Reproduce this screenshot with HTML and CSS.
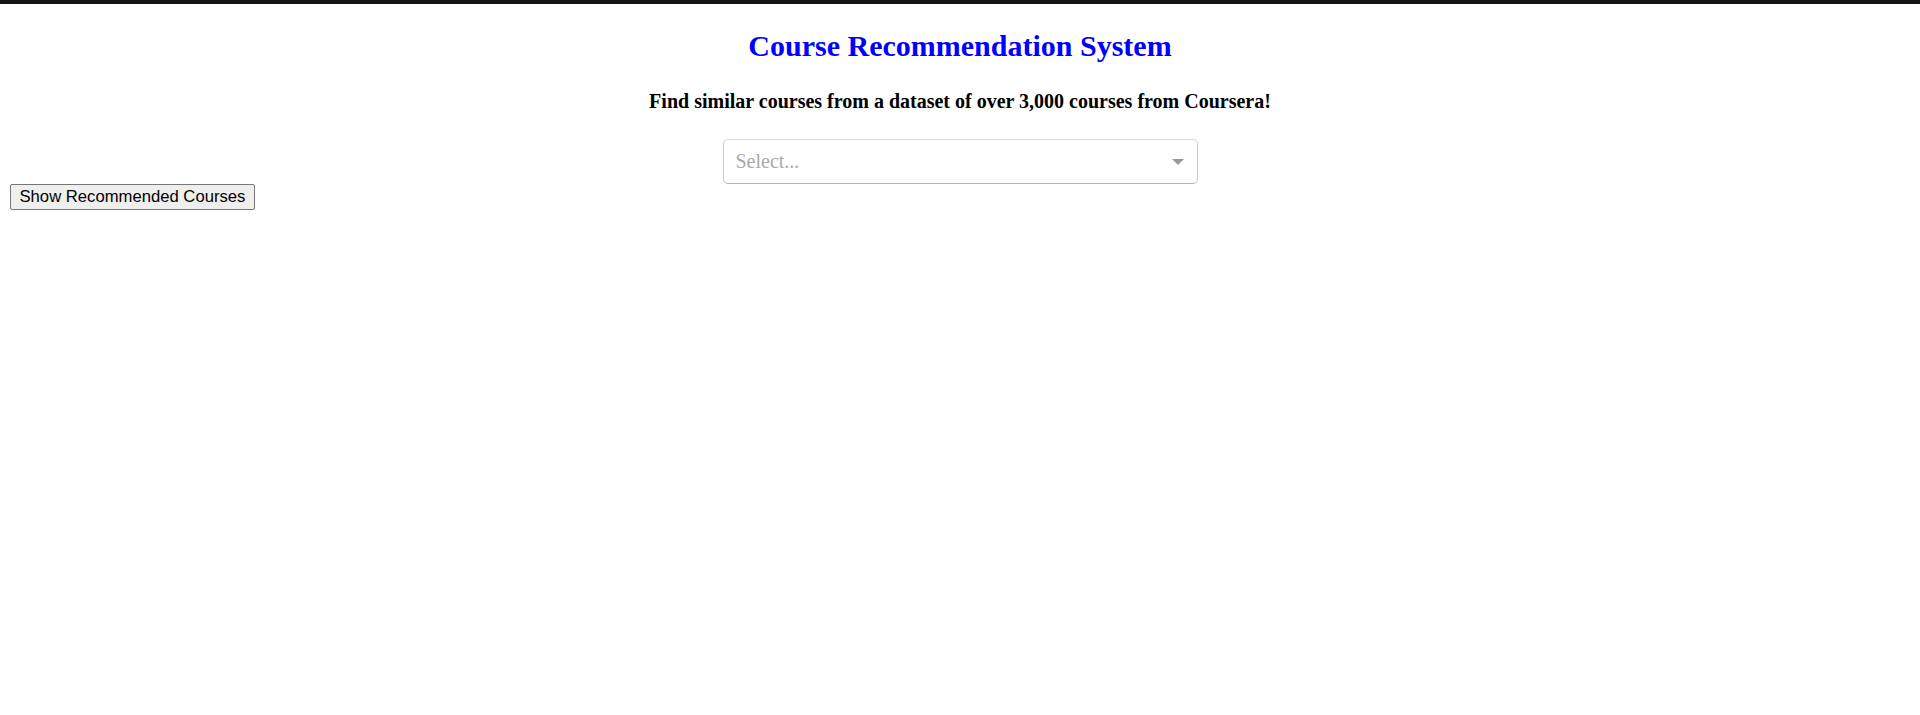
FILE: index.html
```html
<!DOCTYPE html>
<html lang="en">
<head>
<meta charset="utf-8">
<title>Course Recommendation System</title>
<link rel="stylesheet" href="styles.css">
</head>
<body>
<div class="topbar"></div>
<main class="page">
  <section class="intro">
    <h2 class="title">Course Recommendation System</h2>
    <h4 class="subtitle">Find similar courses from a dataset of over 3,000 courses from Coursera!</h4>
    <div class="select">
      <span class="select-placeholder">Select...</span>
      <span class="select-arrow-zone"><span class="select-arrow"></span></span>
    </div>
  </section>
  <button class="show-btn" type="button">Show Recommended Courses</button>
</main>
</body>
</html>
```
FILE: styles.css
```css
html, body {
  margin: 0;
  padding: 0;
  background: #ffffff;
}

body {
  font-family: "Liberation Serif", "Times New Roman", serif;
  color: #000000;
}

.topbar {
  height: 4px;
  background: #161616;
}

.page {
  padding: 0 10px;
}

.intro {
  display: flex;
  flex-direction: column;
  align-items: center;
  text-align: center;
}

.title {
  margin: 25px 0 0;
  font-size: 30px;
  line-height: 34px;
  font-weight: bold;
  color: #0000ff;
}

.subtitle {
  margin: 27px 0 0;
  font-size: 20px;
  line-height: 23px;
  font-weight: bold;
}

.select {
  box-sizing: border-box;
  margin-top: 26px;
  width: 475px;
  height: 45px;
  border: 1px solid #cccccc;
  border-color: #d9d9d9 #cccccc #b3b3b3;
  border-radius: 5px;
  background: #ffffff;
  display: flex;
  align-items: center;
  padding-left: 12px;
}

.select-placeholder {
  flex: 1;
  text-align: left;
  font-size: 20px;
  color: #aaaaaa;
}

.select-arrow-zone {
  width: 31px;
  padding-right: 3px;
  display: flex;
  justify-content: center;
  align-items: center;
}

.select-arrow {
  width: 0;
  height: 0;
  border-style: solid;
  border-width: 6px 6px 3px;
  border-color: #999999 transparent transparent;
  margin-top: 3px;
}

.show-btn {
  display: block;
  margin: 0;
  box-sizing: border-box;
  height: 26px;
  padding: 0 8.5px;
  font-family: "Liberation Sans", Arial, sans-serif;
  font-size: 16.67px;
  color: #000000;
  background: #efefef;
  border: 1px solid #767676;
  border-radius: 2px;
}
```
